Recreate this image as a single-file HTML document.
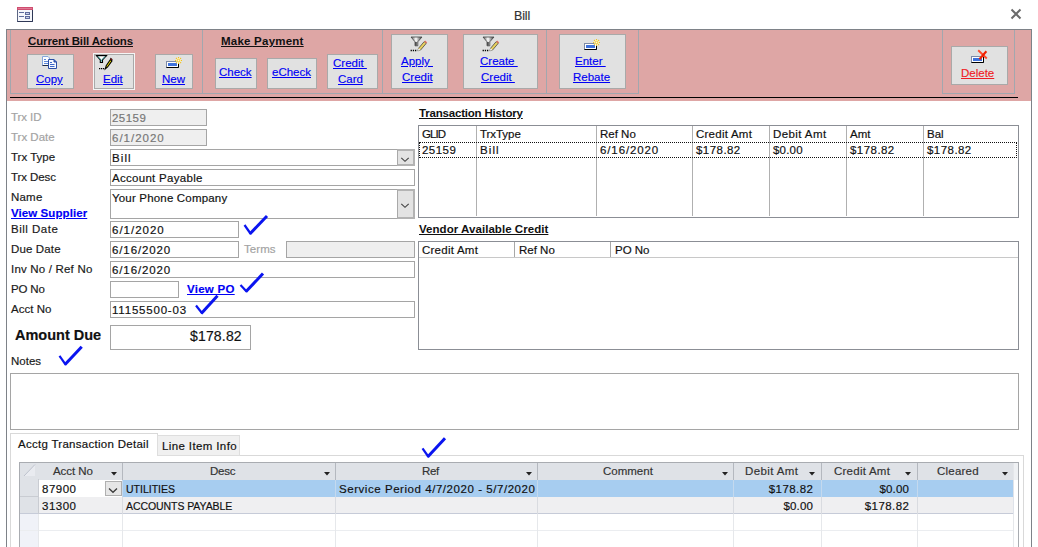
<!DOCTYPE html><html><head><meta charset="utf-8"><style>
*{box-sizing:border-box;margin:0;padding:0}
html,body{width:1038px;height:547px;overflow:hidden;background:#fff;font-family:"Liberation Sans",sans-serif;font-size:11.5px;color:#1a1a1a}
.a{position:absolute}
.t{position:absolute;white-space:nowrap;line-height:1;-webkit-text-stroke:0.18px currentColor}
.box{position:absolute;border:1px solid #a5a5a5;background:#fff}
.dis{background:#efefef}
.btn{position:absolute;background:#e1e1e1;border:1px solid #a9a9a9}
.lnk{color:#0000f5;text-decoration:underline;white-space:nowrap;position:absolute;line-height:1;font-size:11.5px;-webkit-text-stroke:0.15px currentColor}
.grp{position:absolute;border:1px solid #a2a7ae;border-top:none}
.dd{position:absolute;background:#e3e3e3;border:2px solid #b3b3b3;border-left:1px solid #a9a9a9}
.hdr{position:absolute;white-space:nowrap;line-height:1;font-weight:bold;text-decoration:underline;color:#111;font-size:11.5px}
.vl{position:absolute;width:1px}
.hl{position:absolute;height:1px}
</style></head><body>
<svg class="a" style="left:17px;top:7px" width="16" height="15" viewBox="0 0 16 15">
<rect x="0.5" y="0.5" width="15" height="14" fill="#f6f7fb" stroke="#5c6684"/>
<path d="M15.5 1V14.5H0.5" fill="none" stroke="#2f3856"/>
<rect x="0" y="0" width="16" height="3" fill="#cf4d70"/>
<rect x="1" y="1" width="14" height="1" fill="#e07a95"/>
<rect x="2" y="5" width="5" height="1" fill="#5f6c9c"/>
<rect x="2" y="9" width="5" height="1" fill="#5f6c9c"/>
<rect x="8.5" y="5.5" width="4" height="2" fill="#c8d0ea" stroke="#5f6c9c"/>
<rect x="8.5" y="9.5" width="4" height="2" fill="#c8d0ea" stroke="#5f6c9c"/>
</svg>
<div class="t" style="left:514px;top:10px;font-size:12.5px;color:#333;letter-spacing:-0.17px">Bill</div>
<svg class="a" style="left:1010px;top:8px" width="12" height="12" viewBox="0 0 12 12"><path d="M1.5 1.5L10.5 10.5M10.5 1.5L1.5 10.5" stroke="#6b6b6b" stroke-width="2"/></svg>
<div class="a" style="left:6px;top:29px;width:1026px;height:518px;border:1px solid #7e8288;border-bottom:none;background:#fff"></div>
<div class="a" style="left:7px;top:30px;width:1024px;height:71px;background:#dea6a5"></div>
<div class="hl" style="left:10px;top:97px;width:1008px;height:1px;background:#000"></div>
<div class="grp" style="left:10px;top:30px;width:193px;height:64px;"></div>
<div class="grp" style="left:202px;top:30px;width:181px;height:64px;"></div>
<div class="grp" style="left:382px;top:30px;width:165px;height:64px;"></div>
<div class="grp" style="left:546px;top:30px;width:93px;height:64px;"></div>
<div class="grp" style="left:942px;top:30px;width:73px;height:64px;"></div>
<div class="hdr" style="left:28px;top:36px;;letter-spacing:-0.13px">Current Bill Actions</div>
<div class="hdr" style="left:221px;top:36px;;letter-spacing:0.23px">Make Payment</div>
<div class="btn" style="left:27px;top:54px;width:47px;height:35px;"></div>
<div class="lnk" style="left:36px;top:74px;">Copy</div>
<div class="a" style="left:93px;top:53px;width:42px;height:37px;border:1px solid #f5f5f5"></div>
<div class="btn" style="left:94px;top:54px;width:40px;height:35px;"></div>
<div class="lnk" style="left:103px;top:74px;">Edit</div>
<div class="btn" style="left:155px;top:54px;width:38px;height:35px;"></div>
<div class="lnk" style="left:162px;top:74px;">New</div>
<div class="btn" style="left:215px;top:58px;width:42px;height:31px;"></div>
<div class="lnk" style="left:219px;top:67px;">Check</div>
<div class="btn" style="left:267px;top:58px;width:50px;height:31px;"></div>
<div class="lnk" style="left:272px;top:67px;">eCheck</div>
<div class="btn" style="left:327px;top:54px;width:51px;height:35px;"></div>
<div class="lnk" style="left:333px;top:58px;">Credit&nbsp;</div>
<div class="lnk" style="left:338px;top:74px;">Card</div>
<div class="btn" style="left:391px;top:34px;width:57px;height:55px;"></div>
<div class="lnk" style="left:401px;top:56px;">Apply&nbsp;</div>
<div class="lnk" style="left:402px;top:72px;">Credit</div>
<div class="btn" style="left:463px;top:34px;width:75px;height:55px;"></div>
<div class="lnk" style="left:480px;top:56px;">Create&nbsp;</div>
<div class="lnk" style="left:481px;top:72px;">Credit&nbsp;</div>
<div class="btn" style="left:559px;top:34px;width:67px;height:55px;"></div>
<div class="lnk" style="left:575px;top:56px;">Enter&nbsp;</div>
<div class="lnk" style="left:573px;top:72px;">Rebate</div>
<div class="btn" style="left:951px;top:46px;width:57px;height:39px;"></div>
<div class="lnk" style="left:961px;top:68px;color:#f01c24">Delete</div>
<svg class="a" style="left:40px;top:54px" width="20" height="16" viewBox="0 0 20 16">
<path d="M2.5 2.5H8L9.5 4V11.5H2.5Z" fill="#fbfdff" stroke="#86a6dc"/>
<path d="M2.5 11.5H9.5" stroke="#1d2a48"/>
<path d="M4 5.5H6M4 7.5H8.5M4 9.5H8.5" stroke="#5f88d8"/>
<path d="M8.5 5.5H14L16.5 8V14.5H8.5Z" fill="#f6f9ff" stroke="#2c4fa6"/>
<path d="M14 5.5V8H16.5" fill="#3a5fc0" stroke="#2c4fa6"/>
<path d="M10 8.5H12M10 10.5H14.5M10 12.5H14.5" stroke="#3d66c8"/>
</svg>
<svg class="a" style="left:94px;top:53px" width="20" height="18" viewBox="0 0 20 18">
<path d="M2.5 2.5H12.5L8.5 6.8V9.5H6.3V6.8Z" fill="#fff" stroke="#000" stroke-width="1.1"/>
<path d="M3.8 3.4L6.8 6.6M11.2 3.4L8.2 6.6M7.4 7V8.6" stroke="#2aa8a8" stroke-width="0.9"/>
<rect x="2" y="2" width="11" height="1.2" fill="#000"/>
<path d="M5 15.6h1.3M7 15.6h1.3M9 15.6h1.3" stroke="#000" stroke-width="1.4"/>
<path d="M11.3 16L12.2 12.8L16.3 6.8L18 7.9L13.6 14Z" fill="#f4e600" stroke="#000" stroke-width="1.1"/>
<path d="M16 5.8L16.8 5.2L18.3 6.2L17.6 7.2Z" fill="#c00000" stroke="#000" stroke-width="0.6"/>
</svg>
<svg class="a" style="left:408px;top:35px" width="20" height="18" viewBox="0 0 20 18">
<defs><linearGradient id="fg408" x1="0" x2="1"><stop offset="0" stop-color="#555"/><stop offset="0.45" stop-color="#fff"/><stop offset="1" stop-color="#333"/></linearGradient></defs>
<path d="M3 2H14L9.8 6.8V10.8H7V6.8Z" fill="url(#fg408)" stroke="#444" stroke-width="0.8"/>
<path d="M8 7V10.5" stroke="#111" stroke-width="1.2"/>
<path d="M2.6 15.5h1.3M4.8 15.5h1.3M7 15.5h1.3" stroke="#000" stroke-width="1.4"/>
<path d="M9.8 15.8L10.6 13.2L16.2 6.6L18.2 8.4L12.6 15Z" fill="#e8d060" stroke="#333" stroke-width="0.7"/>
<path d="M9.8 15.8L10.6 13.2L12.6 15Z" fill="#f4f4f4"/>
<path d="M16.2 6.6L17.2 5.6L19.2 7.4L18.2 8.4Z" fill="#e07060"/>
</svg>
<svg class="a" style="left:480px;top:35px" width="20" height="18" viewBox="0 0 20 18">
<defs><linearGradient id="fg480" x1="0" x2="1"><stop offset="0" stop-color="#555"/><stop offset="0.45" stop-color="#fff"/><stop offset="1" stop-color="#333"/></linearGradient></defs>
<path d="M3 2H14L9.8 6.8V10.8H7V6.8Z" fill="url(#fg480)" stroke="#444" stroke-width="0.8"/>
<path d="M8 7V10.5" stroke="#111" stroke-width="1.2"/>
<path d="M2.6 15.5h1.3M4.8 15.5h1.3M7 15.5h1.3" stroke="#000" stroke-width="1.4"/>
<path d="M9.8 15.8L10.6 13.2L16.2 6.6L18.2 8.4L12.6 15Z" fill="#e8d060" stroke="#333" stroke-width="0.7"/>
<path d="M9.8 15.8L10.6 13.2L12.6 15Z" fill="#f4f4f4"/>
<path d="M16.2 6.6L17.2 5.6L19.2 7.4L18.2 8.4Z" fill="#e07060"/>
</svg>
<svg class="a" style="left:162px;top:51px" width="22" height="18" viewBox="0 0 22 18">
<rect x="4.5" y="10.5" width="12" height="6" fill="#fff" stroke="#7d8aa6"/>
<path d="M16.5 10.5V16.5H4.5" fill="none" stroke="#000"/>
<rect x="6" y="12" width="9" height="3" fill="#3f72dc"/>
<circle cx="16.5" cy="9.5" r="2.4" fill="#fff6b0"/>
<path d="M16.5 6V13M13 9.5H20M14 7L19 12M19 7L14 12" stroke="#f2c020" stroke-width="1.1" stroke-dasharray="1.2 0.8"/>
<circle cx="16.5" cy="9.5" r="1" fill="#fffbe0"/>
</svg>
<svg class="a" style="left:580px;top:33px" width="22" height="18" viewBox="0 0 22 18">
<rect x="4.5" y="10.5" width="12" height="6" fill="#fff" stroke="#7d8aa6"/>
<path d="M16.5 10.5V16.5H4.5" fill="none" stroke="#000"/>
<rect x="6" y="12" width="9" height="3" fill="#3f72dc"/>
<circle cx="16.5" cy="9.5" r="2.4" fill="#fff6b0"/>
<path d="M16.5 6V13M13 9.5H20M14 7L19 12M19 7L14 12" stroke="#f2c020" stroke-width="1.1" stroke-dasharray="1.2 0.8"/>
<circle cx="16.5" cy="9.5" r="1" fill="#fffbe0"/>
</svg>
<svg class="a" style="left:968px;top:47px" width="22" height="18" viewBox="0 0 22 18">
<rect x="3.5" y="9.5" width="12" height="6" fill="#fff" stroke="#7d8aa6"/>
<path d="M15.5 9.5V15.5H3.5" fill="none" stroke="#000"/>
<rect x="5" y="11" width="9" height="3" fill="#3f72dc"/>
<path d="M10.2 3.3L18.8 11.5" stroke="#ff4a2a" stroke-width="1.9"/>
<path d="M18.4 4.3L11.5 12.2" stroke="#f02000" stroke-width="2.1"/>
</svg>
<div class="t" style="left:11px;top:112px;color:#a3a3a3;letter-spacing:-0.08px">Trx ID</div>
<div class="box dis" style="left:110px;top:109px;width:97px;height:17px;"></div>
<div class="t" style="left:112px;top:113px;color:#777;letter-spacing:0.45px">25159</div>
<div class="t" style="left:11px;top:132px;color:#a3a3a3">Trx Date</div>
<div class="box dis" style="left:110px;top:129px;width:97px;height:17px;"></div>
<div class="t" style="left:112px;top:133px;color:#777;letter-spacing:1.0px">6/1/2020</div>
<div class="t" style="left:11px;top:152px;">Trx Type</div>
<div class="box" style="left:110px;top:149px;width:305px;height:17px;"></div>
<div class="t" style="left:112px;top:153px;color:#111;letter-spacing:1.1px">Bill</div>
<div class="dd" style="left:397px;top:149px;width:18px;height:17px;"></div>
<div class="t" style="left:11px;top:172px;;letter-spacing:-0.09px">Trx Desc</div>
<div class="box" style="left:110px;top:169px;width:305px;height:17px;"></div>
<div class="t" style="left:112px;top:173px;color:#111;letter-spacing:0.29px">Account Payable</div>
<div class="t" style="left:11px;top:192px;;letter-spacing:0.2px">Name</div>
<div class="lnk" style="left:11px;top:208px;font-weight:bold;letter-spacing:0.08px">View Supplier</div>
<div class="box" style="left:110px;top:189px;width:305px;height:30px;"></div>
<div class="t" style="left:112px;top:193px;color:#111;letter-spacing:0.18px">Your Phone Company</div>
<div class="dd" style="left:397px;top:189px;width:18px;height:30px;"></div>
<div class="t" style="left:11px;top:224px;;letter-spacing:0.5px">Bill Date</div>
<div class="box" style="left:110px;top:221px;width:129px;height:17px;"></div>
<div class="t" style="left:112px;top:225px;color:#111;letter-spacing:1.0px">6/1/2020</div>
<div class="t" style="left:11px;top:244px;;letter-spacing:0.14px">Due Date</div>
<div class="box" style="left:110px;top:241px;width:129px;height:17px;"></div>
<div class="t" style="left:112px;top:245px;color:#111;letter-spacing:0.88px">6/16/2020</div>
<div class="t" style="left:244px;top:244px;color:#a3a3a3;letter-spacing:0.05px">Terms</div>
<div class="box dis" style="left:286px;top:241px;width:129px;height:17px;"></div>
<div class="t" style="left:11px;top:264px;;letter-spacing:0.19px">Inv No / Ref No</div>
<div class="box" style="left:110px;top:261px;width:305px;height:17px;"></div>
<div class="t" style="left:112px;top:265px;color:#111;letter-spacing:0.88px">6/16/2020</div>
<div class="t" style="left:11px;top:284px;;letter-spacing:-0.15px">PO No</div>
<div class="box" style="left:110px;top:281px;width:69px;height:17px;"></div>
<div class="lnk" style="left:187px;top:284px;font-weight:bold;letter-spacing:0.27px">View PO</div>
<div class="t" style="left:11px;top:304px;;letter-spacing:0.02px">Acct No</div>
<div class="box" style="left:110px;top:301px;width:305px;height:17px;"></div>
<div class="t" style="left:112px;top:305px;color:#111;letter-spacing:0.8px">11155500-03</div>
<div class="t" style="left:15px;top:328px;font-size:14.5px;font-weight:bold;color:#111">Amount Due</div>
<div class="box" style="left:110px;top:325px;width:141px;height:25px;"></div>
<div class="t" style="left:190px;top:329px;font-size:14px;color:#111;letter-spacing:0.17px">$178.82</div>
<div class="t" style="left:11px;top:356px;">Notes</div>
<div class="box" style="left:10px;top:373px;width:1009px;height:57px;"></div>
<svg class="a" style="left:400px;top:157px" width="10" height="6" viewBox="0 0 10 6"><path d="M1.3 0.8L5 4.3L8.7 0.8" fill="none" stroke="#444" stroke-width="1.15"/></svg>
<svg class="a" style="left:400px;top:203px" width="10" height="6" viewBox="0 0 10 6"><path d="M1.3 0.8L5 4.3L8.7 0.8" fill="none" stroke="#444" stroke-width="1.15"/></svg>
<svg class="a" style="left:0;top:0;overflow:visible;z-index:10" width="1" height="1"><path d="M244.5,225 L250.8,234" stroke="#0a14f0" stroke-width="2.2"/><path d="M249.8,234 L267,216" stroke="#0a14f0" stroke-width="3"/></svg>
<svg class="a" style="left:0;top:0;overflow:visible;z-index:10" width="1" height="1"><path d="M240.5,285 L246.8,291.8" stroke="#0a14f0" stroke-width="2.2"/><path d="M245.8,291.8 L263,273.5" stroke="#0a14f0" stroke-width="3"/></svg>
<svg class="a" style="left:0;top:0;overflow:visible;z-index:10" width="1" height="1"><path d="M196,305.5 L202.3,313.5" stroke="#0a14f0" stroke-width="2.2"/><path d="M201.3,313.5 L217.5,295.8" stroke="#0a14f0" stroke-width="3"/></svg>
<svg class="a" style="left:0;top:0;overflow:visible;z-index:10" width="1" height="1"><path d="M59.5,355.8 L65.8,364.8" stroke="#0a14f0" stroke-width="2.2"/><path d="M64.8,364.8 L81.7,346.7" stroke="#0a14f0" stroke-width="3"/></svg>
<svg class="a" style="left:0;top:0;overflow:visible;z-index:10" width="1" height="1"><path d="M422.5,448.3 L428.6,457" stroke="#0a14f0" stroke-width="2.2"/><path d="M427.6,457 L445,438.3" stroke="#0a14f0" stroke-width="3"/></svg>
<div class="hdr" style="left:419px;top:108px;;letter-spacing:-0.19px">Transaction History</div>
<div class="box" style="left:418px;top:125px;width:601px;height:93px;border-color:#8b8e95"></div>
<div class="vl" style="left:476px;top:126px;width:1px;height:90px;background:#b0b0b0"></div>
<div class="vl" style="left:596px;top:126px;width:1px;height:90px;background:#b0b0b0"></div>
<div class="vl" style="left:692px;top:126px;width:1px;height:90px;background:#b0b0b0"></div>
<div class="vl" style="left:769px;top:126px;width:1px;height:90px;background:#b0b0b0"></div>
<div class="vl" style="left:846px;top:126px;width:1px;height:90px;background:#b0b0b0"></div>
<div class="vl" style="left:923px;top:126px;width:1px;height:90px;background:#b0b0b0"></div>
<div class="a" style="left:419px;top:142px;width:598px;height:16px;border:1px dotted #111"></div>
<div class="t" style="left:422px;top:129px;color:#111;letter-spacing:-0.9px">GLID</div>
<div class="t" style="left:480px;top:129px;color:#111;letter-spacing:-0.05px">TrxType</div>
<div class="t" style="left:600px;top:129px;color:#111">Ref No</div>
<div class="t" style="left:696px;top:129px;color:#111;letter-spacing:0.24px">Credit Amt</div>
<div class="t" style="left:773px;top:129px;color:#111;letter-spacing:0.41px">Debit Amt</div>
<div class="t" style="left:850px;top:129px;color:#111">Amt</div>
<div class="t" style="left:927px;top:129px;color:#111">Bal</div>
<div class="t" style="left:422px;top:145px;color:#111;letter-spacing:0.45px">25159</div>
<div class="t" style="left:480px;top:145px;color:#111;letter-spacing:1.1px">Bill</div>
<div class="t" style="left:600px;top:145px;color:#111;letter-spacing:0.88px">6/16/2020</div>
<div class="t" style="left:696px;top:145px;color:#111;letter-spacing:0.45px">$178.82</div>
<div class="t" style="left:773px;top:145px;color:#111;letter-spacing:0.2px">$0.00</div>
<div class="t" style="left:850px;top:145px;color:#111;letter-spacing:0.45px">$178.82</div>
<div class="t" style="left:927px;top:145px;color:#111;letter-spacing:0.45px">$178.82</div>
<div class="hdr" style="left:419px;top:224px;;letter-spacing:0.05px">Vendor Available Credit</div>
<div class="box" style="left:418px;top:241px;width:601px;height:109px;border-color:#8b8e95"></div>
<div class="hl" style="left:419px;top:257px;width:599px;height:1px;background:#c8c8c8"></div>
<div class="vl" style="left:514px;top:242px;width:1px;height:15px;background:#a8a8a8"></div>
<div class="vl" style="left:610px;top:242px;width:1px;height:15px;background:#a8a8a8"></div>
<div class="t" style="left:422px;top:245px;color:#111;letter-spacing:0.24px">Credit Amt</div>
<div class="t" style="left:519px;top:245px;color:#111">Ref No</div>
<div class="t" style="left:615px;top:245px;color:#111">PO No</div>
<div class="a" style="left:10px;top:455px;width:1014px;height:92px;border:1px solid #d9d9d9;border-bottom:none"></div>
<div class="a" style="left:10px;top:433px;width:148px;height:23px;border:1px solid #d9d9d9;border-bottom:none;background:#fff"></div>
<div class="t" style="left:18px;top:439px;color:#111;letter-spacing:0.28px">Acctg Transaction Detail</div>
<div class="a" style="left:157px;top:435px;width:83px;height:21px;border:1px solid #dedede;background:#f0f0f0"></div>
<div class="t" style="left:162px;top:441px;color:#111;letter-spacing:0.38px">Line Item Info</div>
<div class="a" style="left:19px;top:462px;width:1000px;height:85px;border:1px solid #a9acb1;border-bottom:none;background:#fff"></div>
<div class="a" style="left:20px;top:463px;width:994px;height:17px;background:#dfe2e7"></div>
<div class="a" style="left:20px;top:480px;width:18px;height:34px;background:#dfe2e7"></div>
<div class="a" style="left:20px;top:514px;width:18px;height:33px;background:#f0f2f8"></div>
<div class="a" style="left:38px;top:480px;width:976px;height:17px;background:#a7cdf0"></div>
<div class="a" style="left:38px;top:480px;width:84px;height:17px;background:#fff"></div>
<div class="a" style="left:38px;top:497px;width:976px;height:17px;background:#efeff1"></div>
<div class="hl" style="left:20px;top:513px;width:994px;height:1px;background:#c6cbd8"></div>
<div class="hl" style="left:20px;top:530px;width:994px;height:1px;background:#ebedf0"></div>
<div class="vl" style="left:38px;top:514px;width:1px;height:33px;background:#e6e8eb"></div>
<div class="vl" style="left:122px;top:514px;width:1px;height:33px;background:#e6e8eb"></div>
<div class="vl" style="left:335px;top:514px;width:1px;height:33px;background:#e6e8eb"></div>
<div class="vl" style="left:537px;top:514px;width:1px;height:33px;background:#e6e8eb"></div>
<div class="vl" style="left:733px;top:514px;width:1px;height:33px;background:#e6e8eb"></div>
<div class="vl" style="left:821px;top:514px;width:1px;height:33px;background:#e6e8eb"></div>
<div class="vl" style="left:917px;top:514px;width:1px;height:33px;background:#e6e8eb"></div>
<div class="vl" style="left:1013px;top:514px;width:1px;height:33px;background:#e6e8eb"></div>
<div class="vl" style="left:122px;top:463px;width:1px;height:17px;background:#b4b8bf"></div>
<div class="vl" style="left:122px;top:480px;width:1px;height:17px;background:#c4d9ee"></div>
<div class="vl" style="left:122px;top:497px;width:1px;height:17px;background:#d9dbe0"></div>
<div class="vl" style="left:335px;top:463px;width:1px;height:17px;background:#b4b8bf"></div>
<div class="vl" style="left:335px;top:480px;width:1px;height:17px;background:#c4d9ee"></div>
<div class="vl" style="left:335px;top:497px;width:1px;height:17px;background:#d9dbe0"></div>
<div class="vl" style="left:537px;top:463px;width:1px;height:17px;background:#b4b8bf"></div>
<div class="vl" style="left:537px;top:480px;width:1px;height:17px;background:#c4d9ee"></div>
<div class="vl" style="left:537px;top:497px;width:1px;height:17px;background:#d9dbe0"></div>
<div class="vl" style="left:733px;top:463px;width:1px;height:17px;background:#b4b8bf"></div>
<div class="vl" style="left:733px;top:480px;width:1px;height:17px;background:#c4d9ee"></div>
<div class="vl" style="left:733px;top:497px;width:1px;height:17px;background:#d9dbe0"></div>
<div class="vl" style="left:821px;top:463px;width:1px;height:17px;background:#b4b8bf"></div>
<div class="vl" style="left:821px;top:480px;width:1px;height:17px;background:#c4d9ee"></div>
<div class="vl" style="left:821px;top:497px;width:1px;height:17px;background:#d9dbe0"></div>
<div class="vl" style="left:917px;top:463px;width:1px;height:17px;background:#b4b8bf"></div>
<div class="vl" style="left:917px;top:480px;width:1px;height:17px;background:#c4d9ee"></div>
<div class="vl" style="left:917px;top:497px;width:1px;height:17px;background:#d9dbe0"></div>
<div class="a" style="left:1014px;top:463px;width:4px;height:17px;background:#eef0f3"></div>
<div class="vl" style="left:1013px;top:463px;width:1px;height:17px;background:#e4e6ea"></div>
<div class="vl" style="left:1013px;top:480px;width:1px;height:34px;background:#dfe3ea"></div>
<div class="vl" style="left:38px;top:479px;width:1px;height:35px;background:#c9ccd2"></div>
<div class="hl" style="left:20px;top:496px;width:18px;height:1px;background:#c9ccd2"></div>
<div class="a" style="left:105px;top:481px;width:17px;height:15px;background:#e6e6e6;border:1px solid #b0b0b0"></div>
<svg class="a" style="left:108px;top:487px" width="10" height="7" viewBox="0 0 10 7"><path d="M1 1.6L5 5.3L9 1.6" fill="none" stroke="#3a3a3a" stroke-width="1.3"/></svg>
<svg class="a" style="left:20px;top:462px" width="18" height="16" viewBox="0 0 18 16"><path d="M4 14L15 2.5V14Z" fill="#e9ebf0"/><path d="M4 14L15 2.5" stroke="#b9bdca" stroke-width="0.9"/></svg>
<div class="t" style="left:53px;top:466px;color:#333;letter-spacing:-0.08px">Acct No</div>
<div class="t" style="left:210px;top:466px;color:#333;letter-spacing:-0.23px">Desc</div>
<div class="t" style="left:422px;top:466px;color:#333;letter-spacing:-0.35px">Ref</div>
<div class="t" style="left:603px;top:466px;color:#333">Comment</div>
<div class="t" style="left:745px;top:466px;color:#333;letter-spacing:0.38px">Debit Amt</div>
<div class="t" style="left:834px;top:466px;color:#333;letter-spacing:0.24px">Credit Amt</div>
<div class="t" style="left:937px;top:466px;color:#333;letter-spacing:0.22px">Cleared</div>
<svg class="a" style="left:111px;top:472px" width="6" height="4" viewBox="0 0 6 4"><path d="M0 0H6L3 3.5Z" fill="#222"/></svg>
<svg class="a" style="left:324px;top:472px" width="6" height="4" viewBox="0 0 6 4"><path d="M0 0H6L3 3.5Z" fill="#222"/></svg>
<svg class="a" style="left:526px;top:472px" width="6" height="4" viewBox="0 0 6 4"><path d="M0 0H6L3 3.5Z" fill="#222"/></svg>
<svg class="a" style="left:722px;top:472px" width="6" height="4" viewBox="0 0 6 4"><path d="M0 0H6L3 3.5Z" fill="#222"/></svg>
<svg class="a" style="left:809px;top:472px" width="6" height="4" viewBox="0 0 6 4"><path d="M0 0H6L3 3.5Z" fill="#222"/></svg>
<svg class="a" style="left:905px;top:472px" width="6" height="4" viewBox="0 0 6 4"><path d="M0 0H6L3 3.5Z" fill="#222"/></svg>
<svg class="a" style="left:1002px;top:472px" width="6" height="4" viewBox="0 0 6 4"><path d="M0 0H6L3 3.5Z" fill="#222"/></svg>
<div class="t" style="left:42px;top:484px;color:#111;letter-spacing:0.5px">87900</div>
<div class="t" style="left:126px;top:484px;color:#111;font-size:10.5px">UTILITIES</div>
<div class="t" style="left:339px;top:484px;color:#111;letter-spacing:0.55px">Service Period 4/7/2020 - 5/7/2020</div>
<div class="t" style="left:42px;top:501px;color:#111;letter-spacing:0.5px">31300</div>
<div class="t" style="left:126px;top:501px;color:#111;font-size:10.5px;letter-spacing:-0.07px">ACCOUNTS PAYABLE</div>
<div class="t" style="right:224.55px;top:484px;color:#111;letter-spacing:0.45px">$178.82</div>
<div class="t" style="right:128.80px;top:484px;color:#111;letter-spacing:0.2px">$0.00</div>
<div class="t" style="right:224.80px;top:501px;color:#111;letter-spacing:0.2px">$0.00</div>
<div class="t" style="right:128.55px;top:501px;color:#111;letter-spacing:0.45px">$178.82</div>
</body></html>
